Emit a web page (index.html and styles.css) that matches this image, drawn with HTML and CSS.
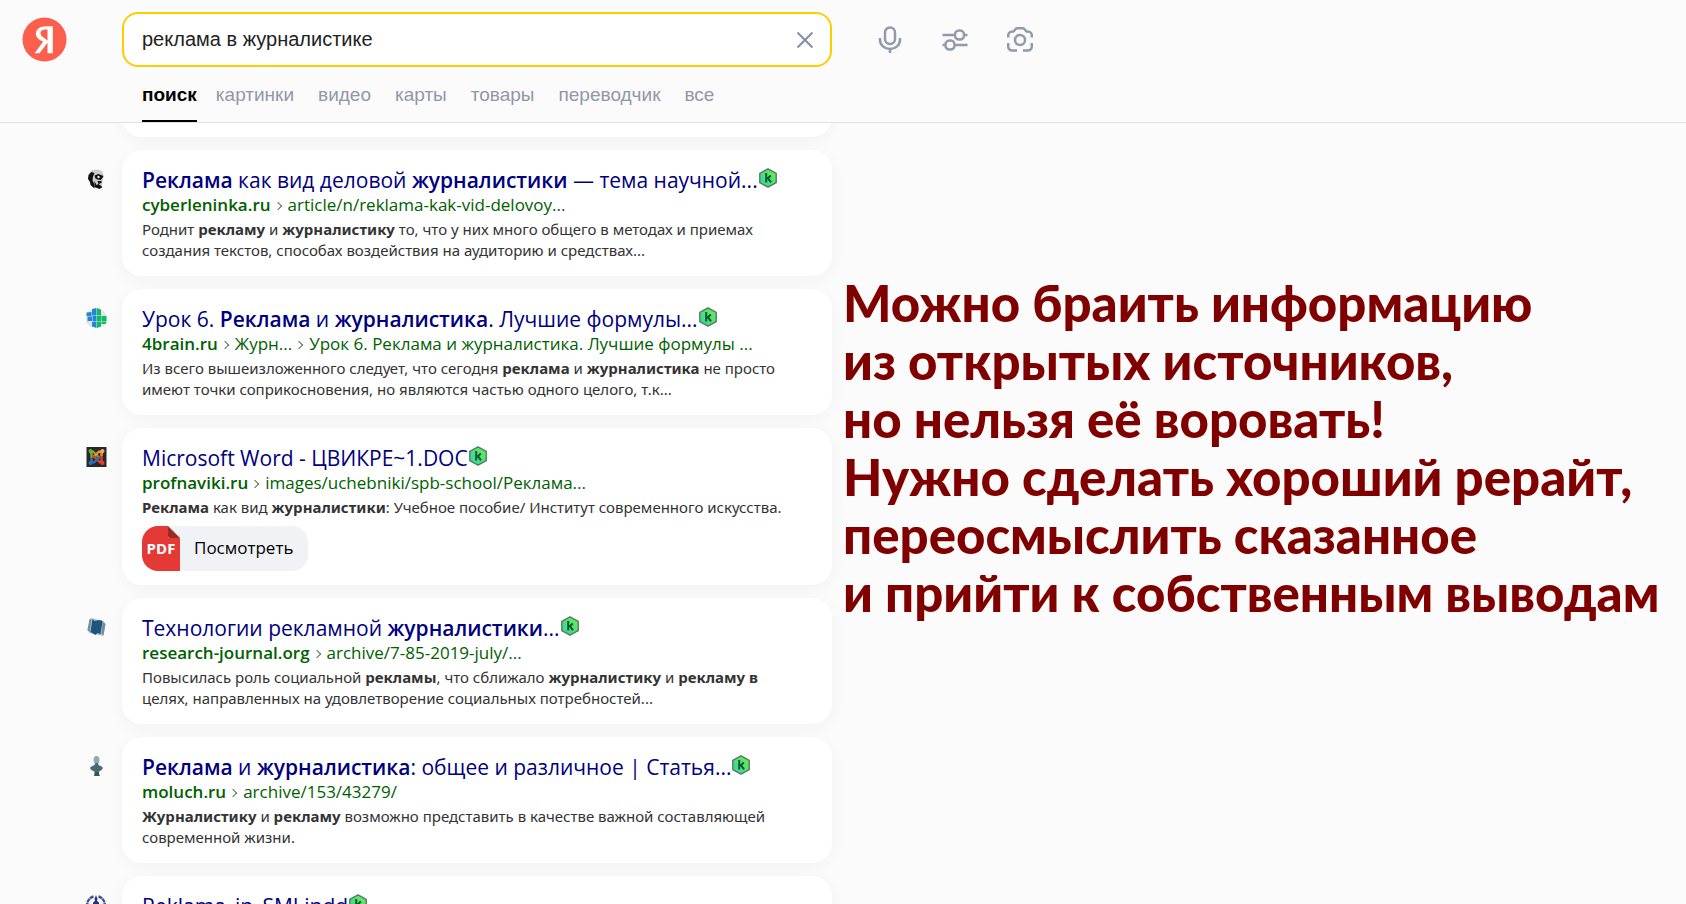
FILE: index.html
```html
<!DOCTYPE html>
<html lang="ru">
<head>
<meta charset="utf-8">
<title>реклама в журналистике</title>
<link rel="stylesheet" href="styles.css">
</head>
<body>
<svg class="defs" aria-hidden="true">
  <defs>
    <linearGradient id="kg" x1="0" y1="1" x2="1" y2="0"><stop offset="0" stop-color="#2ad7a4"/><stop offset="1" stop-color="#6df04a"/></linearGradient>
    <symbol id="k" viewBox="0 0 20 20">
      <path d="M10 .8 18.200 5.300v9.400L10 19.200 1.800 14.700V5.300z" fill="url(#kg)" stroke="#5d7568" stroke-width="1.400" stroke-linejoin="round"/>
      <path d="M8.200 5v9.400M12.800 7.600 9 11M10 10.200l3 4.200" fill="none" stroke="#17533a" stroke-width="2"/>
    </symbol>
  </defs>
</svg>
<header class="header">
  <div class="header-row">
    <a class="logo" href="#" aria-label="Яндекс">
      <svg viewBox="0 0 46 46"><circle cx="23" cy="23" r="22.500" fill="#fc5f4b"/><path d="M27.400 9.500h-3.200c-5.200 0-10 2.800-10 7.500 0 3.600 2.700 5.400 5.700 7.400l1.600 1-8.600 11.600h5l8.200-10.800v10.800H31.500V9.500zm-1.300 14.400-2-1.400c-3.300-2.200-5.200-3.400-5.200-6.200 0-2.200 2.500-3.400 5.600-3.400h1.600z" fill="#fff"/></svg>
    </a>
    <form class="search">
      <input class="search-input" type="text" aria-label="Запрос" value="реклама в журналистике">
      <button class="clear" type="button" aria-label="Очистить"><svg viewBox="0 0 20 20"><path d="M2.500 2.500l15 15M17.500 2.500l-15 15"/></svg></button>
    </form>
    <div class="tools">
      <button class="tool" type="button" aria-label="Голосовой поиск"><svg viewBox="0 0 28 28"><rect x="9" y="1.500" width="10" height="16.500" rx="5"/><path d="M4 12v2a10 9 0 0 0 20 0V12M14 23v4"/></svg></button>
      <button class="tool" type="button" aria-label="Настройки"><svg viewBox="0 0 28 28"><path d="M1.500 9h12M23 9h3.500M1.500 19h3M14 19h12.500"/><rect x="14" y="4.500" width="9" height="9" rx="4"/><rect x="4.500" y="14.500" width="9" height="9" rx="4"/></svg></button>
      <button class="tool" type="button" aria-label="Поиск по картинке"><svg viewBox="0 0 28 28"><path d="M2.200 11.500V9.500a4 4 0 0 1 4-4h1.300L9.600 3q.7-.8 1.800-.8h5.200q1.100 0 1.800.8l2.100 2.500h1.300a4 4 0 0 1 4 4V11.500M2.200 17v3.500a4 4 0 0 0 4 4H11M25.800 17v3.500a4 4 0 0 1-4 4H17"/><circle cx="14" cy="14" r="5"/></svg></button>
    </div>
  </div>
  <nav class="tabs">
    <a class="tab tab-active" href="#">поиск</a>
    <a class="tab" href="#">картинки</a>
    <a class="tab" href="#">видео</a>
    <a class="tab" href="#">карты</a>
    <a class="tab" href="#">товары</a>
    <a class="tab" href="#">переводчик</a>
    <a class="tab" href="#">все</a>
  </nav>
</header>
<div class="content">
  <main class="results">
    <div class="card card-tail"></div>
    <article class="item">
      <svg class="fav" viewBox="0 0 20 20"><path d="M2 9Q1 1 9 .5q8-.5 8 6L15 19H8z" fill="#c9cccd"/><path d="M2 6 1.500 10l2 3 .5 3 4 3.500-.5-5-1.500-3 .5-4L8 4 5 3zM8 6.500 12 5l5 2-1 2-2 2-3-.5-2-1zM11 12l4 0 0 2-3 1zM8 12l2 4 2-1 4 3-3 2-5-2z" fill="#111"/><circle cx="12" cy="8" r="1.200" fill="#eee"/></svg>
      <div class="card">
        <h2 class="title"><a href="#"><b>Реклама</b> как вид деловой <b>журналистики</b> — тема научной...</a><svg class="badge"><use href="#k"/></svg></h2>
        <div class="path"><a href="#"><b>cyberleninka.ru</b></a><i class="sep"></i><a href="#">article/n/reklama-kak-vid-delovoy...</a></div>
        <p class="text">Роднит <b>рекламу</b> и <b>журналистику</b> то, что у них много общего в методах и приемах<br>создания текстов, способах воздействия на аудиторию и средствах...</p>
      </div>
    </article>
    <article class="item">
      <svg class="fav" viewBox="0 0 20 20"><path d="M4 2h12l4 5v9l-4 3H4l-4-4V6z" fill="#e2e4e5"/><path d="M5.500 1 10 0v7.500H5.500zM0 4.500 5 4v4H0zM1 8.500h4.500V13H1zM6 8h4v5.500H6zM5.500 14H10v6l-4.500-1.500z" fill="#2186d3"/><path d="M10.500 0 14.500 1.500V7.500h-4zM15 8h5v5h-5zM10.500 8h4v5.500h-4zM10.500 14h4v4.500l-4 1.500zM15 13.500h5l-1 2.500h-4z" fill="#0dbd62"/></svg>
      <div class="card">
        <h2 class="title"><a href="#">Урок 6. <b>Реклама</b> и <b>журналистика</b>. Лучшие формулы...</a><svg class="badge"><use href="#k"/></svg></h2>
        <div class="path"><a href="#"><b>4brain.ru</b></a><i class="sep"></i><a href="#">Журн...</a><i class="sep"></i><a href="#">Урок 6. Реклама и журналистика. Лучшие формулы ...</a></div>
        <p class="text">Из всего вышеизложенного следует, что сегодня <b>реклама</b> и <b>журналистика</b> не просто<br>имеют точки соприкосновения, но являются частью одного целого, т.к...</p>
      </div>
    </article>
    <article class="item">
      <svg class="fav" viewBox="0 0 20 20"><rect width="20" height="20" fill="#292929"/><g fill="none" stroke-width="2.400" stroke-linejoin="round"><path d="M5 11V7L4 4l3 1 6 6" stroke="#70ad35"/><path d="M7 10l5-5 4-1-1 3v2" stroke="#f4912d"/><path d="M15 9v4l1 3-3-1-6-6" stroke="#e4402b"/><path d="M13 10l-5 5-4 1 1-3v-2" stroke="#2c6fb4"/></g><circle cx="4" cy="4" r="2" fill="#70ad35"/><circle cx="16" cy="4" r="2" fill="#f7a95d"/><circle cx="16" cy="16" r="2" fill="#e4402b"/><circle cx="4" cy="16" r="2" fill="#2c6fb4"/></svg>
      <div class="card">
        <h2 class="title"><a href="#">Microsoft Word - ЦВИКРЕ~1.DOC</a><svg class="badge"><use href="#k"/></svg></h2>
        <div class="path"><a href="#"><b>profnaviki.ru</b></a><i class="sep"></i><a href="#">images/uchebniki/spb-school/Реклама...</a></div>
        <p class="text"><b>Реклама</b> как вид <b>журналистики</b>: Учебное пособие/ Институт современного искусства.</p>
        <a class="doc" href="#"><span class="pdf"><svg class="fold" viewBox="0 0 12 12"><path d="M0 0h12v12H2a2 2 0 0 1-2-2z" fill="#f0f2f5"/><path d="M0 0l12 12H2a2 2 0 0 1-2-2z" fill="#9c2a27"/></svg>PDF</span><span class="doc-label">Посмотреть</span></a>
      </div>
    </article>
    <article class="item">
      <svg class="fav" viewBox="0 0 20 20"><path d="M4 1 17 4l2 3-2 12-14-3-2-3z" fill="#a9bccb"/><path d="M3 2l2 1-2 12-2-2zM16 5l3 2-2 11-2-1z" fill="#6d90a5"/><path d="M6 2l2 2 5-1 3 1-2 13-3-1-2 2-5-3z" fill="#1d5678"/></svg>
      <div class="card">
        <h2 class="title"><a href="#">Технологии рекламной <b>журналистики</b>...</a><svg class="badge"><use href="#k"/></svg></h2>
        <div class="path"><a href="#"><b>research-journal.org</b></a><i class="sep"></i><a href="#">archive/7-85-2019-july/...</a></div>
        <p class="text">Повысилась роль социальной <b>рекламы</b>, что сближало <b>журналистику</b> и <b>рекламу в</b><br>целях, направленных на удовлетворение социальных потребностей...</p>
      </div>
    </article>
    <article class="item">
      <svg class="fav" viewBox="0 0 20 20"><ellipse cx="10" cy="4" rx="3" ry="4" fill="#91aaad"/><path d="M9 7h2.500l.5 2 4 2q1 2-1 3l-3 2H8.500L5 14q-2-1-1-3l4-2z" fill="#466c6c"/><path d="M8 16h4.500v2l1 2h-6l.5-2z" fill="#465052"/></svg>
      <div class="card">
        <h2 class="title"><a href="#"><b>Реклама</b> и <b>журналистика</b>: общее и различное | Статья...</a><svg class="badge"><use href="#k"/></svg></h2>
        <div class="path"><a href="#"><b>moluch.ru</b></a><i class="sep"></i><a href="#">archive/153/43279/</a></div>
        <p class="text"><b>Журналистику</b> и <b>рекламу</b> возможно представить в качестве важной составляющей<br>современной жизни.</p>
      </div>
    </article>
    <article class="item">
      <svg class="fav" viewBox="0 0 20 20"><path d="M7 1.500a8.500 8.500 0 0 0-4 14M12 1.500a8.500 8.500 0 0 1 4 14" fill="none" stroke="#4b4f92" stroke-width="2.400" stroke-dasharray="4 .5"/><path d="M9.500 0 11 4l-.5 2 2 1.500v6l-3 3-3-3v-6l2-1.500L8 4z" fill="#2a2f77"/></svg>
      <div class="card">
        <h2 class="title"><a href="#">Reklama_in_SMI.indd</a><svg class="badge"><use href="#k"/></svg></h2>
      </div>
    </article>
  </main>
  <aside class="note">
    <p class="note-text">Можно браить информацию<br>из открытых источников,<br>но нельзя её воровать!<br>Нужно сделать хороший рерайт,<br>переосмыслить сказанное<br>и прийти к собственным выводам</p>
  </aside>
</div>
</body>
</html>
```
FILE: styles.css
```css
* { box-sizing: border-box; }
html { height: 100%; overflow: hidden; }
body {
  height: 100%;
  margin: 0;
  display: flex;
  flex-direction: column;
  overflow: hidden;
  background: #fbfbfb;
  color: #333;
  font-family: "Open Sans", "Noto Sans", sans-serif;
}
a { color: inherit; text-decoration: none; }
b { font-weight: 600; }
button { padding: 0; border: 0; background: none; }
.defs { position: absolute; width: 0; height: 0; }

.header {
  flex: none;
  position: relative;
  z-index: 1;
  padding-top: 12px;
  background: #fbfbfb;
  border-bottom: 1px solid #e0e0e8;
}
.header-row { display: flex; align-items: center; padding-left: 22px; }
.logo { width: 45px; height: 45px; margin-right: 55px; }
.logo svg { display: block; }
.search {
  flex: 0 1 710px;
  display: flex;
  align-items: center;
  height: 55px;
  padding: 0 15px 0 18px;
  border: 2px solid #fc0;
  border-radius: 16px;
  background: #fff;
}
.search-input {
  flex: 1;
  min-width: 0;
  padding: 0;
  border: 0;
  outline: 0;
  background: none;
  color: #222;
  font: 20px "Liberation Sans", sans-serif;
}
.clear svg { display: block; width: 20px; height: 20px; stroke: #858da3; stroke-width: 2; fill: none; }
.tools { display: flex; gap: 37px; margin-left: 44px; }
.tool svg { display: block; width: 28px; height: 28px; stroke: #9299ad; stroke-width: 2.5; fill: none; }
.tabs {
  display: flex;
  gap: 24px;
  padding-left: 142px;
  font: 19px/20px "Liberation Sans", sans-serif;
  color: #9197a8;
}
.tab { padding: 18px 0 15px; border-bottom: 2px solid transparent; }
.tab-active { margin-right: -5px; color: #000; font-weight: 700; border-color: #000; }

.content { flex: 1; min-height: 0; display: flex; align-items: flex-start; overflow: hidden; }
.results {
  flex: 0 1 746px;
  min-width: 0;
  display: flex;
  flex-direction: column;
  gap: 13px;
  margin-left: 86px;
}
.item { display: flex; align-items: flex-start; gap: 15px; }
.fav { flex: none; width: 21px; height: 20px; margin-top: 19px; }
.card {
  flex: 1;
  min-width: 0;
  min-height: 126px;
  padding: 17px 20px 14px;
  border-radius: 20px;
  background: #fff;
  box-shadow: 0 4px 16px rgba(0, 20, 20, .04);
}
.card-tail { flex: none; min-height: 0; height: 44px; margin: -30px 0 0 36px; }
.title {
  display: flex;
  margin: 0;
  color: #000080;
  font-size: 21px;
  line-height: 26px;
  font-weight: 400;
  white-space: nowrap;
}
.badge { flex: none; width: 20px; height: 20px; margin-top: 1px; }
.path {
  display: flex;
  height: 24px;
  color: #006000;
  font-size: 17px;
  line-height: 24px;
  white-space: nowrap;
}
.sep {
  width: 6px;
  height: 6px;
  margin: 10px 7px 0 4px;
  border: solid #4b7a4b;
  border-width: 1px 1px 0 0;
  transform: rotate(45deg);
}
.text { margin: 2px 0 0; font: 15px/21px "Noto Sans", sans-serif; white-space: nowrap; }
.text b { font-weight: 700; }
.doc {
  display: inline-flex;
  margin-top: 8px;
  height: 45px;
  border-radius: 16px;
  overflow: hidden;
  background: #f0f2f5;
  color: #000;
  font-size: 17px;
  line-height: 44px;
  font-weight: 500;
}
.pdf {
  position: relative;
  width: 38px;
  background: #e53935;
  color: #fff;
  font-size: 15px;
  font-weight: 700;
  text-align: center;
}
.fold { position: absolute; top: 0; right: 0; width: 12px; height: 12px; }
.doc-label { padding: 0 15px 0 14px; }

.note { flex: 1 1 0; padding: 151px 0 0 11px; }
.note-text {
  margin: 0;
  color: #800000;
  font: 900 51px/58px Lato, "Noto Sans", sans-serif;
  white-space: nowrap;
}
```
